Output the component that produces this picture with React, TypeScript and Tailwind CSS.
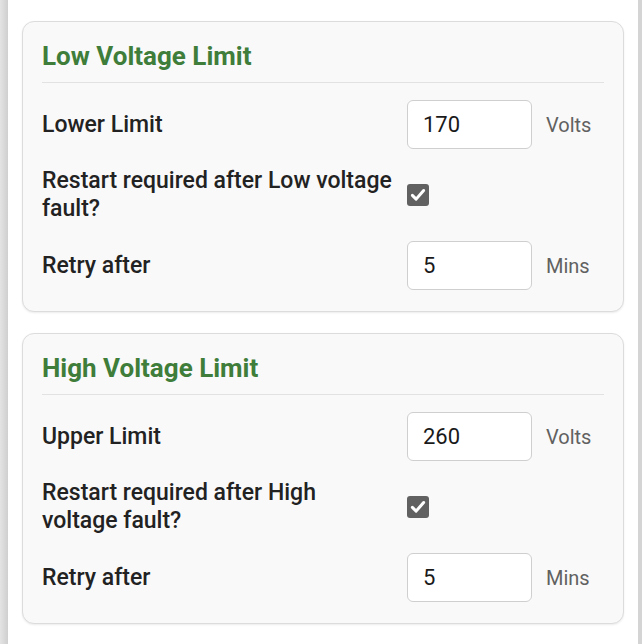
import React from 'react';

type Row =
  | { kind: 'input'; label: string; value: string; unit: string }
  | { kind: 'check'; label: string; checked: boolean };

type Section = { title: string; rows: Row[] };

const sections: Section[] = [
  {
    title: 'Low Voltage Limit',
    rows: [
      { kind: 'input', label: 'Lower Limit', value: '170', unit: 'Volts' },
      { kind: 'check', label: 'Restart required after Low voltage fault?', checked: true },
      { kind: 'input', label: 'Retry after', value: '5', unit: 'Mins' },
    ],
  },
  {
    title: 'High Voltage Limit',
    rows: [
      { kind: 'input', label: 'Upper Limit', value: '260', unit: 'Volts' },
      { kind: 'check', label: 'Restart required after High voltage fault?', checked: true },
      { kind: 'input', label: 'Retry after', value: '5', unit: 'Mins' },
    ],
  },
];

function CheckBox({ checked }: { checked: boolean }) {
  return (
    <div className="w-[22px] h-[22px] rounded-[3px] bg-[#616161] flex items-center justify-center">
      {checked && (
        <svg viewBox="0 0 24 24" className="w-[18px] h-[18px]" fill="none" stroke="white" strokeWidth="4" strokeLinecap="round" strokeLinejoin="round">
          <path d="M4.5 12.5l5 5L19.5 6" />
        </svg>
      )}
    </div>
  );
}

function SettingRow({ row }: { row: Row }) {
  return (
    <div className="flex items-center">
      <div className="w-[352px] text-[23px] leading-[28px] font-medium text-[#222222]">{row.label}</div>
      <div className="ml-[13px] w-[125px]">
        {row.kind === 'input' ? (
          <div className="h-[49px] rounded-[6px] border border-[#cfcfcf] bg-white flex items-center pl-[15px] text-[22px] text-[#1a1a1a]">
            {row.value}
          </div>
        ) : (
          <CheckBox checked={row.checked} />
        )}
      </div>
      {row.kind === 'input' && (
        <div className="ml-[14px] text-[20px] text-[#616161]">{row.unit}</div>
      )}
    </div>
  );
}

function Card({ section }: { section: Section }) {
  return (
    <div className="shrink-0 rounded-[12px] border border-[#dcdcdc] bg-[#f9f9f9] px-[19px] pt-[19px] pb-[21px] shadow-[0_1px_2px_rgba(0,0,0,0.08)]">
      <h2 className="text-[26px] leading-[30px] font-bold text-[#3f7d3a]">{section.title}</h2>
      <div className="mt-[11px] h-px bg-[#e2e2e2]" />
      <div className="mt-[17px] flex flex-col gap-[18px]">
        {section.rows.map((row, i) => (
          <SettingRow key={i} row={row} />
        ))}
      </div>
    </div>
  );
}

export default function App() {
  return (
    <div className="h-[644px] overflow-hidden bg-[#dedede] flex" style={{ fontFamily: 'Roboto, "Noto Sans", sans-serif' }}>
      <div className="w-[8px] bg-gradient-to-r from-[#e4e4e4] to-[#cfcfcf]" />
      <div className="w-[630px] bg-white px-[14px] flex flex-col gap-[21px]">
        <div className="-mt-[40px] h-[40px] shrink-0 rounded-[12px] border border-[#dcdcdc] bg-[#f9f9f9]" />
        {sections.map((s) => (
          <Card key={s.title} section={s} />
        ))}
        <div className="h-[40px] shrink-0 rounded-[12px] border border-[#dcdcdc] bg-[#f9f9f9]" />
      </div>
      <div className="flex-1 bg-[#d4d4d4]" />
    </div>
  );
}
